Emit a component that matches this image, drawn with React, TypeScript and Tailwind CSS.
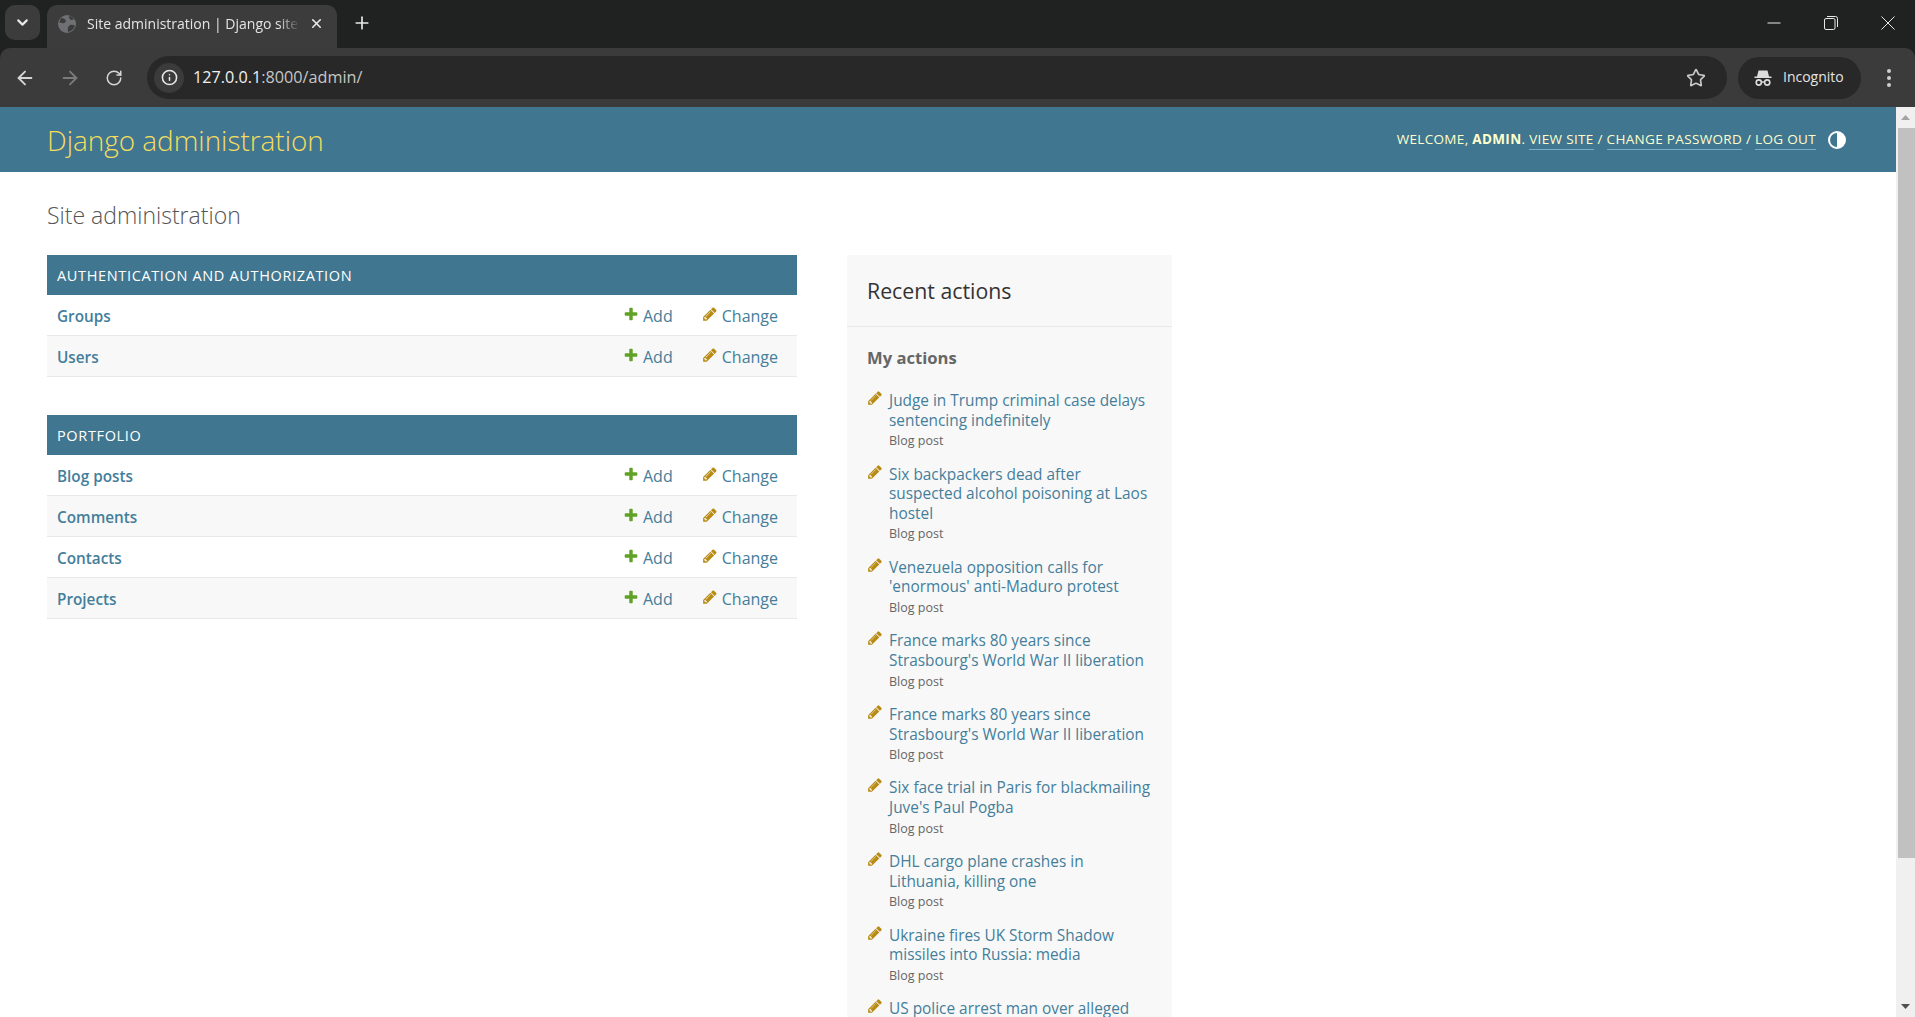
import { ArrowLeft, ArrowRight, ChevronDown, Info, Plus, RotateCw, Star, X } from "lucide-react";

const sections = [
  { title: "AUTHENTICATION AND AUTHORIZATION", rows: ["Groups", "Users"] },
  { title: "PORTFOLIO", rows: ["Blog posts", "Comments", "Contacts", "Projects"] },
];

const actions = [
  ["Judge in Trump criminal case delays", "sentencing indefinitely"],
  ["Six backpackers dead after", "suspected alcohol poisoning at Laos", "hostel"],
  ["Venezuela opposition calls for", "'enormous' anti-Maduro protest"],
  ["France marks 80 years since", "Strasbourg's World War II liberation"],
  ["France marks 80 years since", "Strasbourg's World War II liberation"],
  ["Six face trial in Paris for blackmailing", "Juve's Paul Pogba"],
  ["DHL cargo plane crashes in", "Lithuania, killing one"],
  ["Ukraine fires UK Storm Shadow", "missiles into Russia: media"],
];

function Pencil({ className }: { className?: string }) {
  return (
    <svg viewBox="0 0 1792 1792" className={className}>
      <path
        fill="#b88b14"
        d="M491 1536l91-91-235-235-91 91v107h128v128h107zm523-928q0-22-22-22-10 0-17 7l-542 542q-7 7-7 17 0 22 22 22 10 0 17-7l542-542q7-7 7-17zm-54-192l416 416-832 832h-416v-416zm683 96q0 53-37 90l-166 166-416-416 166-165q36-38 90-38 53 0 91 38l235 234q37 39 37 91z"
      />
    </svg>
  );
}

function AddIcon() {
  return (
    <svg viewBox="0 0 1792 1792" className="mr-[4px] mt-[-5px] h-[16px] w-[16px]">
      <path
        fill="#5fa225"
        d="M1600 796v192q0 40-28 68t-68 28h-416v416q0 40-28 68t-68 28h-192q-40 0-68-28t-28-68v-416h-416q-40 0-68-28t-28-68v-192q0-40 28-68t68-28h416v-416q0-40 28-68t68-28h192q40 0 68 28t28 68v416h416q40 0 68 28t28 68z"
      />
    </svg>
  );
}

function TabBar() {
  return (
    <div className="flex h-[48px] shrink-0 items-end bg-[#202221] pl-[5px]">
      <div className="mb-[8px] flex h-[35px] w-[35px] items-center justify-center rounded-[10px] bg-[#3c3c3c]">
        <ChevronDown className="h-[17px] w-[17px] text-[#e8e8e8]" strokeWidth={3} />
      </div>
      <div className="ml-[7px] flex h-[43px] w-[290px] items-center rounded-t-[10px] bg-[#3c3c3c] pb-[6px] pl-[11px]">
        <svg viewBox="0 0 18 18" className="h-[18px] w-[18px] shrink-0">
          <circle cx="9" cy="9" r="9" fill="#6e7073" />
          <path d="M3 3 Q7 3 8 6 Q7 9 4 8 Q2 7 1 8 Z M10 17 Q9 12 12 10 Q15 9 17 11 Q15 16 10 17 Z M11 1 Q11 5 14 5 L16 4 Q14 1 11 1 Z" fill="#3c3c3c" />
        </svg>
        <span className="ml-[11px] w-[213px] overflow-hidden whitespace-nowrap text-[14px] text-[#e4e4e4] [mask-image:linear-gradient(to_right,black_90%,transparent)]">
          Site administration | Django site admin
        </span>
        <X className="ml-[9px] h-[15px] w-[15px] shrink-0 text-[#e8e8e8]" strokeWidth={2.6} />
      </div>
      <Plus className="mb-[15px] ml-[15px] h-[20px] w-[20px] text-[#e8e8e8]" strokeWidth={2} />
      <div className="flex-1" />
      <div className="mb-[18px] flex items-center gap-[43px] pr-[20px]">
        <svg viewBox="0 0 14 14" className="h-[14px] w-[14px]"><path d="M0.5 7 H13.5" stroke="#e8e8e8" strokeWidth="1" /></svg>
        <svg viewBox="0 0 14 14" className="h-[14px] w-[14px]" fill="none" stroke="#e8e8e8"><rect x="0.5" y="2.5" width="10.5" height="11" rx="1.5" /><path d="M3 0.5 H11.5 Q13.5 0.5 13.5 2.5 V11" /></svg>
        <svg viewBox="0 0 14 14" className="h-[14px] w-[14px]"><path d="M0.5 0.5 L13.5 13.5 M13.5 0.5 L0.5 13.5" stroke="#e8e8e8" strokeWidth="1" /></svg>
      </div>
    </div>
  );
}

function ToolBar() {
  return (
    <div className="shrink-0 bg-[#202221]">
      <div className="flex h-[59px] items-center rounded-t-[10px] bg-[#3b3b3b] pl-[14px] pr-[24px]">
        <ArrowLeft className="h-[22px] w-[22px] text-[#d6d6d6]" />
        <ArrowRight className="ml-[23px] h-[22px] w-[22px] text-[#7b7b7b]" />
        <RotateCw className="ml-[24px] h-[18px] w-[18px] text-[#d6d6d6]" />
        <div className="ml-[24px] flex h-[43px] flex-1 items-center rounded-full bg-[#282828] pl-[7px] pr-[21px]">
          <div className="flex h-[30px] w-[30px] items-center justify-center rounded-full bg-[#3b3b3b]">
            <Info className="h-[17px] w-[17px] text-[#e8e8e8]" strokeWidth={2.2} />
          </div>
          <span className="ml-[9px] text-[16.2px] text-[#c6c6c6]">
            <span className="text-[#f1f1f1]">127.0.0.1</span>:8000/admin/
          </span>
          <div className="flex-1" />
          <Star className="h-[20px] w-[20px] text-[#c8c8c8]" strokeWidth={2} />
        </div>
        <div className="ml-[11px] flex h-[42px] w-[123px] items-center rounded-full bg-[#282828] pl-[16px]">
          <svg viewBox="0 0 18 18" className="h-[18px] w-[18px]" fill="#dcdcdc">
            <path d="M4.5 1.5 H13.5 L15 7.5 H17.5 V9 H0.5 V7.5 H3 Z" />
            <circle cx="4.8" cy="13.5" r="2.6" fill="none" stroke="#dcdcdc" strokeWidth="1.6" />
            <circle cx="13.2" cy="13.5" r="2.6" fill="none" stroke="#dcdcdc" strokeWidth="1.6" />
            <path d="M7.4 13 H10.6" stroke="#dcdcdc" strokeWidth="1.4" />
          </svg>
          <span className="ml-[11px] pb-[2px] text-[14px] text-[#e4e4e4]">Incognito</span>
        </div>
        <div className="ml-[26px] flex flex-col gap-[3px]">
          <div className="h-[4px] w-[4px] rounded-full bg-[#cfcfcf]" />
          <div className="h-[4px] w-[4px] rounded-full bg-[#cfcfcf]" />
          <div className="h-[4px] w-[4px] rounded-full bg-[#cfcfcf]" />
        </div>
      </div>
    </div>
  );
}

function Section({ title, rows }: { title: string; rows: string[] }) {
  return (
    <div className="mb-[38px]">
      <div className="flex h-[40px] items-center bg-[#417690] pl-[10px] pt-[2px] text-[14.5px] tracking-[0.65px] text-white">{title}</div>
      {rows.map((row, i) => (
        <div
          key={row}
          className={`flex h-[41px] items-center border-b border-[#e8e8e8] pl-[10px] pr-[19px] pt-[2px] text-[16px] text-[#447e9b] ${i % 2 ? "bg-[#f8f8f8]" : "bg-white"}`}
        >
          <span className="flex-1 text-[15.3px] font-semibold">{row}</span>
          <span className="flex w-[79px] items-center">
            <AddIcon />
            Add
          </span>
          <span className="flex w-[76px] items-center">
            <Pencil className="mr-[4px] mt-[-5px] h-[16px] w-[16px]" />
            Change
          </span>
        </div>
      ))}
    </div>
  );
}

function RecentActions() {
  return (
    <div className="ml-[50px] w-[325px] shrink-0 self-stretch bg-[#f8f8f8]">
      <div className="flex h-[72px] items-center border-b border-[#e8e8e8] pl-[20px] text-[21.3px] text-[#333]">
        Recent actions
      </div>
      <div className="px-[20px] pt-[20px]">
        <div className="mb-[22px] text-[16.6px] font-bold leading-[22px] text-[#666]">My actions</div>
        <div className="flex flex-col gap-[13.4px]">
          {actions.map((lines, i) => (
            <div key={i} className="flex">
              <Pencil className="mt-[-1px] h-[16px] w-[16px] shrink-0" />
              <div className="ml-[6px]">
                {lines.map((l) => (
                  <div key={l} className="whitespace-nowrap text-[15.4px] leading-[19.6px] text-[#447e9b]">{l}</div>
                ))}
                <div className="mt-[1px] text-[12.5px] leading-[20px] text-[#666]">Blog post</div>
              </div>
            </div>
          ))}
          <div className="flex">
            <Pencil className="mt-[-1px] h-[16px] w-[16px] shrink-0" />
            <div className="ml-[6px] whitespace-nowrap text-[15.4px] leading-[19.6px] text-[#447e9b]">US police arrest man over alleged</div>
          </div>
        </div>
      </div>
    </div>
  );
}

function Scrollbar() {
  return (
    <div className="flex w-[19px] shrink-0 flex-col bg-[#f0f0f0] pl-[2px]">
      <div className="flex h-[21px] items-center justify-center pr-[2px]">
        <svg viewBox="0 0 9 5" className="h-[5px] w-[9px]"><path d="M4.5 0 L9 5 H0 Z" fill="#a3a3a3" /></svg>
      </div>
      <div className="h-[730px] bg-[#c1c1c1]" />
      <div className="flex-1" />
      <div className="flex h-[21px] items-center justify-center pr-[2px]">
        <svg viewBox="0 0 9 5" className="h-[5px] w-[9px]"><path d="M4.5 5 L9 0 H0 Z" fill="#505050" /></svg>
      </div>
    </div>
  );
}

export default function App() {
  return (
    <div className="flex h-screen flex-col overflow-hidden bg-white [font-family:'Open_Sans',sans-serif]">
      <TabBar />
      <ToolBar />
      <div className="flex min-h-0 flex-1">
        <div className="min-w-0 flex-1 overflow-hidden">
          <header className="flex h-[65px] items-center bg-[#417690] pl-[47px] pr-[50px]">
            <span className="flex-1 pt-[2px] text-[27.9px] font-light text-[#f5dd5d]">Django administration</span>
            <span className="text-[13.5px] tracking-[0.33px] text-[#ffc]">
              WELCOME, <b>ADMIN</b>.{" "}
              <span className="border-b border-[#79aec8] pb-[1px]">VIEW SITE</span> /{" "}
              <span className="border-b border-[#79aec8] pb-[1px]">CHANGE PASSWORD</span> /{" "}
              <span className="border-b border-[#79aec8] pb-[1px]">LOG OUT</span>
            </span>
            <svg viewBox="0 0 18 18" className="ml-[12px] h-[18px] w-[18px]">
              <circle cx="9" cy="9" r="8" fill="#417690" stroke="white" strokeWidth="2" />
              <path d="M9 1 A8 8 0 0 1 9 17 Z" fill="white" />
            </svg>
          </header>
          <main className="px-[47px] pt-[27px]">
            <h1 className="mb-[24px] text-[23px] font-light leading-[32px] text-[#555]">Site administration</h1>
            <div className="flex">
              <div className="w-[750px] shrink-0">
                {sections.map((s) => (
                  <Section key={s.title} title={s.title} rows={s.rows} />
                ))}
              </div>
              <RecentActions />
            </div>
          </main>
        </div>
        <Scrollbar />
      </div>
    </div>
  );
}
